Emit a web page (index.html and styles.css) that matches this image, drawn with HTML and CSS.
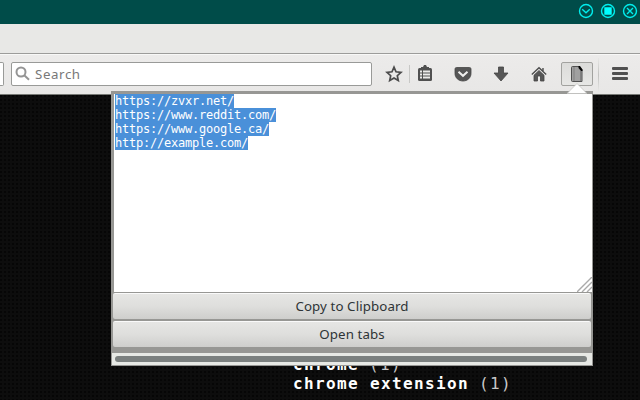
FILE: index.html
```html
<!DOCTYPE html>
<html lang="en">
<head>
<meta charset="utf-8">
<title>Browser</title>
<link rel="stylesheet" href="styles.css">
</head>
<body>
<header class="titlebar">
  <svg viewBox="0 0 16 16"><circle cx="8" cy="8" r="6.500"/><path d="M4.200 6.300 8 9.800l3.800-3.500"/></svg>
  <svg viewBox="0 0 16 16"><circle cx="8" cy="8" r="6.500"/><path class="solid" d="M5 5h6v6H5z"/></svg>
  <svg viewBox="0 0 16 16"><circle cx="8" cy="8" r="6.500"/><path d="m5 5 6 6m0-6-6 6"/></svg>
</header>
<div class="tabs"></div>
<nav class="toolbar">
  <div class="url"></div>
  <div class="search">
    <svg class="lens" viewBox="0 0 16 16"><circle cx="6" cy="6" r="4.500"/><path d="m9.500 9.500 4.500 4.200"/></svg>
    <span>Search</span>
  </div>
  <svg class="icon star" viewBox="0 0 18 18"><path d="m9 2.200 2 4.600 5 .5-3.700 3.400 1 4.900L9 13.100l-4.300 2.500 1-4.900L2 7.300l5-.5z"/></svg>
  <span class="divider"></span>
  <svg class="icon list" viewBox="0 0 18 18"><rect class="frame" x="2" y="4" width="14" height="13" rx="1.500"/><path class="frame" d="M5 5V3h2l1-2h2l1 2h2v2z"/><path class="gaps" d="M4 7.500h2M7 7.500h7M4 10.500h2M7 10.500h7M4 13.500h2M7 13.500h7"/></svg>
  <svg class="icon pocket" viewBox="0 0 18 18"><path class="fill" d="M2.500 2.500h13q1.500 0 1.500 1.500v4.500c0 4-3.300 7.500-8 7.500s-8-3.500-8-7.500V4q0-1.500 1.500-1.500z"/><path class="check" d="m4.500 6.800 4.500 4 4.500-4"/></svg>
  <svg class="icon down" viewBox="0 0 18 18"><path class="fill" d="M6.500 2h5v6H16l-7 8-7-8h4.500z"/></svg>
  <svg class="icon home" viewBox="0 0 18 18"><path class="fill" d="M4 10.200 9 5.500l5 4.700V16h-3.500v-5h-3v5H4z"/><path class="roof" d="M1.800 9.500 9 2.800l7.200 6.700M13 3v3"/></svg>
  <div class="button">
    <svg viewBox="0 0 14 18"><path class="page" d="M2.500 1.500h6.500l3 3.500v11.500H2.500q-1 0-1-1v-13q0-1 1-1z"/><path class="fold" d="M8.500 1H10l2.500 3.500V6H11L8.500 3z"/><path class="spine" d="M4 2v14M10.500 6v10"/></svg>
  </div>
  <span class="divider tall"></span>
  <div class="menu"><i></i><i></i><i></i></div>
</nav>
<main class="content">
  <div>chrome <span>(1)</span></div>
  <div>chrome extension <span>(1)</span></div>
</main>
<section class="popup">
  <svg class="arrow" viewBox="0 0 20 10"><path d="M0 10 10 0l10 10z"/></svg>
  <div class="textarea">
    <div><mark>https://zvxr.net/</mark></div>
    <div><mark>https://www.reddit.com/</mark></div>
    <div><mark>https://www.google.ca/</mark></div>
    <div><mark>http://example.com/</mark></div>
    <svg class="grip" viewBox="0 0 15 15"><path d="M0 15 15 0M5 15 15 5M10 15l5-5"/></svg>
  </div>
  <div class="action"><span>Copy to Clipboard</span></div>
  <div class="action"><span>Open tabs</span></div>
  <div class="scroll"><i></i></div>
</section>
</body>
</html>
```
FILE: styles.css
```css
* { box-sizing: border-box; }
body {
  margin: 0;
  width: 640px;
  height: 400px;
  overflow: hidden;
  display: flex;
  flex-direction: column;
  position: relative;
  background: #0b0b0b;
  font-family: "Noto Sans", "Open Sans", sans-serif;
  font-size: 13.3px;
}
svg { display: block; fill: none; flex: none; }
.titlebar {
  height: 24px;
  flex: none;
  display: flex;
  justify-content: flex-end;
  gap: 6px;
  padding: 3px 2px 0 0;
  background: #004c49;
}
.titlebar svg { width: 16px; height: 16px; stroke: #00eded; stroke-width: 1.4; }
.titlebar .solid { fill: #00ffff; stroke: #00ffff; }
.tabs { height: 30px; flex: none; background: #e8e8e6; border-bottom: 1px solid #9c9c9a; }
.toolbar {
  height: 41px;
  flex: none;
  display: flex;
  align-items: flex-start;
  padding-top: 8px;
  border-top: 1px solid #f8f8f7;
  border-bottom: 1px solid #777975;
  background: linear-gradient(#ecebea, #e8e7e6);
}
.url, .search { height: 24px; margin-top: -1px; background: #fff; border: 1px solid #999a98; }
.url { width: 4px; border-left: 0; border-radius: 0 2px 2px 0; }
.search {
  width: 361px;
  margin-left: 7px;
  border-radius: 2px;
  display: flex;
  padding: 3px 0 0 3px;
  color: #787878;
  line-height: 17px;
}
.search span { margin-left: 4px; letter-spacing: .6px; }
.lens { width: 16px; height: 16px; stroke: #949494; stroke-width: 2; }
.icon { width: 18px; height: 18px; margin-top: 2px; stroke: #4c4c4c; }
.fill { fill: #565656; stroke: #454545; stroke-width: .8; }
.star { margin-left: 13px; stroke-width: 1.7; }
.divider { width: 1px; height: 18px; margin: 2px 0 0 6px; background: #c8c8c6; }
.list { margin-left: 6px; margin-top: 1px; }
.list .frame { fill: #505050; stroke: none; }
.list .gaps { stroke: #ecebea; stroke-width: 2; }
.pocket { margin-left: 20px; }
.check { stroke: #f0f0ef; stroke-width: 2; }
.down { margin-left: 20px; }
.home { margin-left: 20px; }
.roof { stroke-width: 1.4; }
.button {
  width: 32px;
  height: 24px;
  margin: -1px 0 0 13px;
  padding: 2px 0 0 8px;
  border: 1px solid #a2a29f;
  border-radius: 2px;
  background: linear-gradient(#dcdcda, #e7e7e5);
}
.button svg { width: 14px; height: 18px; }
.page { fill: #a0a0a0; stroke: #505050; }
.spine { stroke: #808080; }
.fold { fill: #050505; }
.divider.tall { height: 34px; margin: -5px 0 0 5px; background: linear-gradient(#e8e8e6, #c2c2c0, #e8e8e6); }
.menu { width: 16px; margin: 4px 0 0 13px; display: grid; gap: 2px; }
.menu i { height: 3px; border-radius: 1px; background: #505050; }
.content {
  flex: 1;
  padding: 260px 0 0 293px;
  background: radial-gradient(circle at 1px 1px, #040404 0 .6px, transparent 1.1px) 0 0 / 4px 4px, #0d0d0d;
  color: #fff;
  font: bold 16px/19px "DejaVu Sans Mono", monospace;
  letter-spacing: 1.37px;
}
.content span { font-weight: 400; color: #c8c8c8; margin-left: -1px; }
.popup {
  position: absolute;
  left: 111px;
  top: 91px;
  width: 482px;
  height: 275px;
  padding-top: 3px;
  border: 0 solid #969693;
  border-width: 0 1px 1px;
  background: #979794;
  display: flex;
  flex-direction: column;
}
.arrow { position: absolute; left: 455px; top: -8px; width: 20px; height: 11px; fill: #fff; stroke: #bdbdba; stroke-width: .7; }
.textarea {
  height: 198px;
  margin-left: 2px;
  position: relative;
  padding-left: 1px;
  background: #fff;
  font: 12px/14px "DejaVu Sans Mono", monospace;
  letter-spacing: -.224px;
}
.textarea div { height: 14px; display: flex; }
.textarea mark { background: #4a90d9; color: #fff; height: 14px; }
.grip { position: absolute; right: 0; bottom: 0; width: 15px; height: 15px; stroke: #aaa; stroke-width: 1.4; }
.action {
  height: 26px;
  margin: 1px 1px 0 1px;
  border-top: 1px solid #fafafa;
  border-radius: 2px;
  background: linear-gradient(#e6e6e4, #dededc 50%, #cececc);
  color: #2e3436;
  text-align: center;
  line-height: 25px;
  letter-spacing: .1px;
}
.action + .action { margin-top: 2px; }
.scroll { height: 12px; margin-top: 6px; padding: 3px 5px 3px 3px; background: #e7e9e5; }
.scroll i { display: block; height: 6px; border-radius: 3px; background: #7b807f; }
```
